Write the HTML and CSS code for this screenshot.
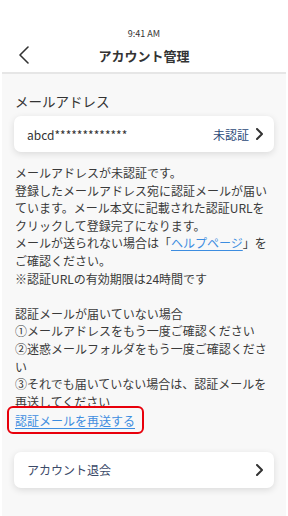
FILE: index.html
```html
<!DOCTYPE html>
<html lang="ja">
<head>
<meta charset="utf-8">
<title>アカウント管理</title>
<link rel="stylesheet" href="styles.css">
</head>
<body>
<div class="frame">
  <header class="header">
    <div class="status">9:41 AM</div>
    <div class="nav">
      <div class="back">
        <svg width="12" height="18" viewBox="0 0 12 18"><polyline points="10,1 2,9 10,17" fill="none" stroke="#333" stroke-width="1.6" stroke-linecap="round" stroke-linejoin="round"/></svg>
      </div>
      <div class="title">アカウント管理</div>
      <div></div>
    </div>
  </header>
  <main class="main">
    <div class="label">メールアドレス</div>
    <div class="card">
      <span class="email">abcd*************</span>
      <span class="right">
        <span class="unverified">未認証</span>
        <svg class="chev" width="7" height="12" viewBox="0 0 7 12"><polyline points="1,1 6,6 1,11" fill="none" stroke="#333" stroke-width="2" stroke-linecap="round" stroke-linejoin="round"/></svg>
      </span>
    </div>
    <p class="desc">メールアドレスが未認証です。<br>登録したメールアドレス宛に認証メールが届いています。メール本文に記載された認証URLをクリックして登録完了になります。<br>メールが送られない場合は「<a class="link" href="#">ヘルプページ</a>」をご確認ください。<br>※認証URLの有効期限は24時間です<br><br>認証メールが届いていない場合<br>①メールアドレスをもう一度ご確認ください<br>②迷惑メールフォルダをもう一度ご確認ください<br>③それでも届いていない場合は、認証メールを再送してください</p>
    <div class="resend-row"><a class="link resend" href="#">認証メールを再送する</a></div>
    <div class="card withdraw">
      <span class="withdraw-text">アカウント退会</span>
      <svg class="chev" width="7" height="12" viewBox="0 0 7 12"><polyline points="1,1 6,6 1,11" fill="none" stroke="#333" stroke-width="2" stroke-linecap="round" stroke-linejoin="round"/></svg>
    </div>
  </main>
</div>
</body>
</html>
```
FILE: styles.css
```css
html, body {
  margin: 0;
  padding: 0;
  background: #ffffff;
}
body {
  font-family: "Noto Sans CJK JP", "Noto Sans", sans-serif;
  color: #333333;
}
.frame {
  margin: 0 2px;
  min-height: 100vh;
  display: flex;
  flex-direction: column;
}
.header {
  background: #ffffff;
  padding-top: 28px;
  padding-bottom: 2px;
  border-bottom: 2px solid #e6e6e6;
}
.status {
  height: 12px;
  line-height: 12px;
  font-size: 9px;
  text-align: center;
  color: #333;
}
.nav {
  height: 30px;
  display: grid;
  grid-template-columns: 40px 1fr 40px;
  align-items: center;
}
.back {
  padding-left: 16px;
  display: flex;
  align-items: center;
  height: 18px;
}
.title {
  text-align: center;
  font-size: 13px;
  font-weight: 700;
  color: #333;
}
.main {
  flex: 1;
  background: #f8f8f8;
  padding: 17px 12px 0 12px;
}
.label {
  font-size: 13.5px;
  line-height: 20px;
  color: #333;
  padding-left: 1px;
}
.card {
  margin-top: 5px;
  height: 36px;
  box-sizing: border-box;
  background: #ffffff;
  border-radius: 7px;
  box-shadow: 0 2px 7px rgba(0, 0, 0, 0.12);
  display: flex;
  align-items: center;
  justify-content: space-between;
  padding: 0 11px 0 13px;
}
.email {
  font-size: 12px;
  color: #333;
}
.right {
  display: flex;
  align-items: center;
  gap: 7px;
}
.unverified {
  font-size: 12px;
  color: #2c4a78;
}
.chev {
  display: block;
}
.desc {
  margin: 12px 0 0 0;
  padding-left: 1px;
  font-size: 12px;
  line-height: 17.6px;
  color: #3a3a3a;
}
.link {
  color: #3d8de0;
  text-decoration: underline;
  text-underline-offset: 2px;
}
.resend-row {
  margin-top: 2px;
  padding-left: 1px;
  font-size: 12px;
  line-height: 17.6px;
}
.resend {
  position: relative;
}
.resend::after {
  content: "";
  position: absolute;
  left: -8px;
  right: -9px;
  top: -6px;
  bottom: -5px;
  border: 2px solid #e8000b;
  border-radius: 6px;
}
.withdraw {
  margin-top: 22px;
}
.withdraw-text {
  font-size: 12px;
  color: #3b4a68;
}
```
